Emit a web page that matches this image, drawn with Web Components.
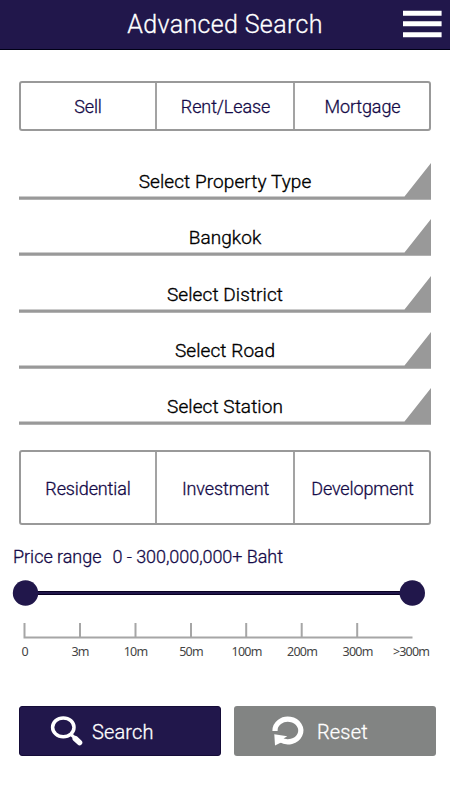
<!DOCTYPE html>
<html lang="en">
<head>
<meta charset="utf-8">
<title>Advanced Search</title>
<style>
html,body{margin:0;background:#fff}
body{width:450px;height:800px;overflow:hidden;font-family:Roboto,"Liberation Sans",sans-serif;color:#21174b}
</style>
</head>
<body>
<search-page></search-page>
<script>
const define = (name, html, setup) => {
  const t = document.createElement('template');
  t.innerHTML = html;
  customElements.define(name, class extends HTMLElement {
    constructor() {
      super();
      this.attachShadow({mode: 'open'}).append(t.content.cloneNode(true));
    }
    connectedCallback() { if (setup) setup(this, this.shadowRoot); }
  });
};

define('app-header', `
<style>
:host{display:grid;grid-template-columns:47px 1fr 47px;align-items:center;box-sizing:border-box;height:50px;background:#21174b;border-bottom:1px solid #000016;color:#fff}
h1{grid-column:2;margin:0;text-align:center;font-size:25px;font-weight:300;line-height:48px;-webkit-text-stroke:.3px #fff;letter-spacing:.35px}
svg{display:block}
</style>
<h1><slot></slot></h1>
<svg width="47" height="49" fill="#fff"><path d="M0 10.7h38.6v5H0zM0 21.3h38.6v5H0zM0 32.2h38.6v5H0z"/></svg>`);

define('segment-group', `
<style>
:host{display:grid;grid-template-columns:137px 137px 1fr;box-sizing:border-box;border:2px solid #999;border-radius:3px;background:#fff}
</style>
<slot></slot>`);

define('segment-item', `
<style>
:host{display:flex;align-items:center;justify-content:center;box-sizing:border-box;border-right:2px solid #a3a3a3;padding-top:1px;font-size:18px;font-weight:300;-webkit-text-stroke:.3px;letter-spacing:-.12px;color:#150b48}
:host(:first-child){margin-right:1px}
:host(:last-child){border-right:0;padding-left:1px}
</style>
<slot></slot>`);

define('select-row', `
<style>
:host{display:grid;grid-template-columns:1fr;height:37px;margin-bottom:19.25px;font-size:19px;line-height:37px;color:#000;letter-spacing:.08px;font-weight:300;-webkit-text-stroke:.35px}
span{grid-area:1/1;text-align:center}
svg{grid-area:1/1;display:block;width:412px;height:37px;stroke:none}
</style>
<svg viewBox="0 0 412 37" fill="#999"><path d="M0 33.6h385.5L412 0v36.8H0z"/></svg>
<span><slot></slot></span>`);

define('price-slider', `
<style>
:host{display:block}
p{margin:0;padding-left:13px;display:flex;gap:11px;font-size:18px;line-height:25px;height:24px;font-weight:300;-webkit-text-stroke:.3px;color:#150b48}
.a{letter-spacing:-.02px}.b{letter-spacing:-.06px}
.s{display:block}
.scale{display:grid;grid-template-columns:repeat(8,55.5px);margin-left:-3.2px;width:444px;font:12.5px/17px "Noto Sans","Open Sans",sans-serif;color:#444;text-align:center;letter-spacing:-.8px}
.scale span{white-space:nowrap}
.scale span:last-child{margin-left:-4px}
</style>
<p><span class="a">Price range</span><span class="b">0 - 300,000,000+ Baht</span></p>
<svg class="s" width="450" height="75" viewBox="0 568 450 75">
<path fill="#090022" d="M25 591h387v4H25z"/><path fill="#21174b" d="M25 592h387v2H25z"/>
<circle cx="25.5" cy="593" r="12.7" fill="#21174b"/><circle cx="412.3" cy="593" r="12.7" fill="#21174b"/>
<path fill="none" stroke="#a6a6a6" stroke-width="2" d="M24.5 623v14.5H412.5M80 623v14M135.5 623v14M191 623v14M246.200 623v14M301.700 623v14M357.200 623v14"/>
</svg>
<div class="scale"></div>`, (host, root) => {
  const scale = root.querySelector('.scale');
  scale.replaceChildren(...host.getAttribute('marks').split(',').map(m => {
    const s = document.createElement('span');
    s.textContent = m;
    return s;
  }));
});

define('action-button', `
<style>
:host{display:grid;grid-template-columns:72px 1fr;align-items:center;box-sizing:border-box;width:202px;height:50px;border-radius:3px;background:#21174b;color:#fff;font-size:20px;font-weight:300;-webkit-text-stroke:.3px;letter-spacing:.15px}
:host([kind=reset]){grid-template-columns:83px 1fr;background:#828483}
:host(:not([kind=reset])){border:1px solid #150c38}
span{padding-top:1px}
::slotted(svg){display:block;-webkit-text-stroke:0}
</style>
<slot name="icon"></slot><span><slot></slot></span>`);

define('search-page', `
<style>
:host{display:flex;flex-direction:column;height:800px}
.types{height:50px;margin:31px 19px 32px}
.fields{padding:0 19px 0 19px;height:281.25px}
.uses{height:75px;margin:6px 19px 19px}
price-slider{height:118px}
.actions{display:flex;gap:13px;padding:0 14px 0 19px;margin-top:44px}
</style>
<app-header>Advanced Search</app-header>
<segment-group class="types"><segment-item>Sell</segment-item><segment-item>Rent/Lease</segment-item><segment-item>Mortgage</segment-item></segment-group>
<div class="fields">
<select-row>Select Property Type</select-row><select-row>Bangkok</select-row><select-row>Select District</select-row><select-row>Select Road</select-row><select-row>Select Station</select-row>
</div>
<segment-group class="uses"><segment-item>Residential</segment-item><segment-item>Investment</segment-item><segment-item>Development</segment-item></segment-group>
<price-slider marks="0,3m,10m,50m,100m,200m,300m,&gt;300m"></price-slider>
<div class="actions">
<action-button><svg slot="icon" width="72" height="48" viewBox="20 707 72 48"><ellipse cx="63.300" cy="727.300" rx="10.700" ry="9.400" fill="none" stroke="#fff" stroke-width="3.500"/><path d="M71 734.500l4 3.500" stroke="#fff" stroke-width="3"/><path d="M75.300 738.700l4.200 3.800" stroke="#fff" stroke-width="5.600" stroke-linecap="round"/></svg>Search</action-button>
<action-button kind="reset"><svg slot="icon" width="83" height="50" viewBox="234 706 83 50"><path d="M275 731A12.900 11.300 0 1 1 280.500 739.800" fill="none" stroke="#fff" stroke-width="5.200"/><path d="M274.300 734.300L287.300 736.300L283.500 738.500L282 742L275 745.500z" fill="#fff"/></svg>Reset</action-button>
</div>`);
</script>
</body>
</html>
